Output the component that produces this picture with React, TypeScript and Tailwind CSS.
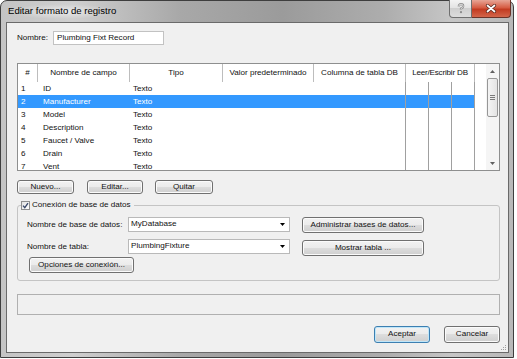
import React from 'react'

const rows = [
  ['1', 'ID'],
  ['2', 'Manufacturer'],
  ['3', 'Model'],
  ['4', 'Description'],
  ['5', 'Faucet / Valve'],
  ['6', 'Drain'],
  ['7', 'Vent'],
]

const btnBase =
  'flex items-center justify-center rounded-[3px] border bg-[linear-gradient(#f2f2f2,#ebebeb_50%,#dddddd_50%,#cfcfcf)] leading-none'

function Btn({ className, children, isDefault }: { className: string; children: React.ReactNode; isDefault?: boolean }) {
  return (
    <div
      className={`${btnBase} ${
        isDefault
          ? 'border-[#3c7fb1] shadow-[inset_0_0_0_1px_#bfe6f9]'
          : 'border-[#707070] shadow-[inset_0_0_0_1px_#fbfbfb]'
      } ${className}`}
    >
      {children}
    </div>
  )
}

function Combo({ value }: { value: string }) {
  return (
    <div className="flex h-[15px] w-[162px] items-center justify-between border border-[#b9b9b9] bg-white pl-[2px] pr-[4px]">
      <span className="leading-none">{value}</span>
      <svg width="5" height="3" viewBox="0 0 5 3">
        <path d="M0 0H5L2.5 3Z" fill="#000" />
      </svg>
    </div>
  )
}

function Scrollbar() {
  return (
    <div className="flex w-[13px] flex-col bg-[#f5f5f5]">
      <div className="flex h-[14px] items-center justify-center">
        <svg width="5" height="3" viewBox="0 0 5 3">
          <path d="M0 3H5L2.5 0Z" fill="#606060" />
        </svg>
      </div>
      <div className="mx-[1px] flex h-[39px] flex-col items-center justify-center gap-[1px] rounded-[2px] border border-[#979797] bg-[linear-gradient(90deg,#f4f4f4,#e4e4e4)]">
        <div className="h-px w-[5px] bg-[#7a7a7a]" />
        <div className="h-px w-[5px] bg-[#7a7a7a]" />
        <div className="h-px w-[5px] bg-[#7a7a7a]" />
      </div>
      <div className="flex-1" />
      <div className="flex h-[13px] items-center justify-center">
        <svg width="5" height="3" viewBox="0 0 5 3">
          <path d="M0 0H5L2.5 3Z" fill="#606060" />
        </svg>
      </div>
    </div>
  )
}

function FieldTable() {
  const head = 'flex h-full items-center justify-center whitespace-nowrap border-r border-[#bdbdbd]'
  return (
    <div className="ml-[10px] mt-[18px] flex h-[108px] w-[483px] border border-[#8e8f8f] bg-white">
      <div className="flex w-[457px] flex-col overflow-hidden">
        <div className="flex h-[18px] shrink-0">
          <div className={`${head} w-[20px]`}>#</div>
          <div className={`${head} w-[92px]`}>Nombre de campo</div>
          <div className={`${head} w-[93px]`}>Tipo</div>
          <div className={`${head} w-[91px]`}>Valor predeterminado</div>
          <div className={`${head} w-[92px]`}>Columna de tabla DB</div>
          <div className={`${head} w-[69px] tracking-[-0.2px]`}>Leer/Escribir DB</div>
        </div>
        <div className="flex-1 overflow-hidden">
          {rows.map(([n, name]) => {
            const sel = n === '2'
            return (
              <div
                key={n}
                className={`flex h-[13px] leading-[13px] ${sel ? 'bg-[#3399ff] text-white' : ''}`}
              >
                <div className="w-[20px] pl-[3px]">{n}</div>
                <div className="w-[92px] pl-[5px]">{name}</div>
                <div className="w-[93px] pl-[3px]">Texto</div>
                <div className="w-[91px]" />
                <div className="w-[92px] border-r border-[#a0a0a0]" />
                <div className="w-[23px] border-r border-[#a0a0a0]" />
                <div className="w-[23px] border-r border-[#a0a0a0]" />
                <div className="w-[23px] border-r border-[#a0a0a0]" />
              </div>
            )
          })}
        </div>
      </div>
      <div className="w-[11px]" />
      <Scrollbar />
    </div>
  )
}

export default function App() {
  return (
    <div className="h-[359px] w-[517px] bg-white font-['Liberation_Sans',Arial,sans-serif] text-[8.1px] text-[#111]">
      <div className="flex h-[358px] w-[514px] flex-col rounded-t-[7px] border border-[#3e3e3e] bg-[linear-gradient(90deg,#c4c4c4_0%,#cfcfcf_14%,#a8a8a8_35%,#9b9b9b_55%,#adadad_75%,#c6c6c6_88%,#b8b8b8_100%)]">
        <div className="flex h-[21px] items-start justify-between">
          <div className="flex h-[21px] items-center pl-[7px]">
            <span className="bg-[radial-gradient(closest-side,rgba(255,255,255,0.55),rgba(255,255,255,0))] text-[9.6px] text-black">
              Editar formato de registro
            </span>
          </div>
          <div className="-mt-px mr-[2px] flex">
            <div className="flex h-[18px] w-[23px] items-center justify-center rounded-bl-[4px] border border-t-0 border-[#6f6f6f] bg-[linear-gradient(#f3f3f3,#e2e2e2_50%,#cfcfcf_50%,#dcdcdc)]">
              <svg width="8" height="11" viewBox="0 0 8 11">
                <path d="M1.8 3.4Q1.8 1.2 4 1.2Q6.2 1.2 6.2 3.3Q6.2 4.7 4 5.6V7" fill="none" stroke="#8a8a8a" strokeWidth="2.2" />
                <path d="M1.8 3.4Q1.8 1.2 4 1.2Q6.2 1.2 6.2 3.3Q6.2 4.7 4 5.6V7" fill="none" stroke="#f0f0f0" strokeWidth="0.8" />
                <circle cx="4" cy="9.2" r="1.1" fill="#8a8a8a" />
              </svg>
            </div>
            <div className="flex h-[18px] w-[39px] items-center justify-center rounded-br-[4px] border border-l-0 border-t-0 border-[#6b3328] bg-[linear-gradient(#e7a596,#d65c43_45%,#c23b21_55%,#d3654a)]">
              <svg width="12" height="9" viewBox="0 0 12 9">
                <path d="M2.5 1.5L9.5 7.5M9.5 1.5L2.5 7.5" stroke="#5a2a20" strokeWidth="3.2" strokeLinecap="round" />
                <path d="M2.5 1.5L9.5 7.5M9.5 1.5L2.5 7.5" stroke="#ffffff" strokeWidth="1.7" strokeLinecap="round" />
              </svg>
            </div>
          </div>
        </div>

        <div className="relative ml-[5px] flex h-[331px] w-[503px] flex-col border border-[#6a6a6a] bg-[#f0f0f0]">
          <div className="ml-[10px] mt-[8px] flex h-[14px] items-center">
            <span className="w-[36px]">Nombre:</span>
            <div className="flex h-[14px] w-[111px] items-center border border-[#c2c2c2] bg-white pl-[3px]">
              Plumbing Fixt Record
            </div>
          </div>

          <FieldTable />

          <div className="ml-[10px] mt-[9px] flex">
            <Btn className="h-[14px] w-[57px]">Nuevo...</Btn>
            <Btn className="ml-[13px] h-[14px] w-[56px]">Editar...</Btn>
            <Btn className="ml-[12px] h-[14px] w-[58px]">Quitar</Btn>
          </div>

          <fieldset className="ml-[10px] mt-[6px] h-[81px] w-[483px] rounded-[3px] border border-[#c4c4c4]">
            <legend className="ml-[3px] flex h-[10px] items-center gap-[2px] pr-[3px]">
              <div className="flex h-[9px] w-[9px] items-center justify-center border border-[#8e8f8f] bg-[linear-gradient(135deg,#e2e2e2,#ffffff)]">
                <svg width="7" height="7" viewBox="0 0 7 7">
                  <path d="M1 3.6L2.8 5.6L6 1.2" fill="none" stroke="#3b4a6b" strokeWidth="1.4" />
                </svg>
              </div>
              <span className="leading-none">Conexión de base de datos</span>
            </legend>
            <div className="pl-[9px]">
              <div className="mt-[7px] flex h-[16px] items-start">
                <span className="w-[101px] leading-[15px]">Nombre de base de datos:</span>
                <Combo value="MyDatabase" />
                <Btn className="ml-[12px] h-[16px] w-[122px]">Administrar bases de datos...</Btn>
              </div>
              <div className="mt-[6px] flex h-[17px] items-start">
                <span className="w-[101px] leading-[15px]">Nombre de tabla:</span>
                <Combo value="PlumbingFixture" />
                <Btn className="ml-[12px] mt-[1px] h-[16px] w-[122px]">Mostrar tabla ...</Btn>
              </div>
              <div className="mt-[1px] flex">
                <Btn className="ml-[2px] h-[16px] w-[105px]">Opciones de conexión...</Btn>
              </div>
            </div>
          </fieldset>

          <div className="ml-[10px] mt-[13px] h-[21px] w-[483px] border border-[#b0b0b0]" />

          <div className="mr-[8px] mt-[11px] flex justify-end gap-[14px]">
            <Btn isDefault className="h-[17px] w-[56px]">Aceptar</Btn>
            <Btn className="h-[17px] w-[56px]">Cancelar</Btn>
          </div>

          <svg className="absolute bottom-[1px] right-[1px]" width="8" height="8" viewBox="0 0 8 8">
            <rect x="6" y="2" width="1" height="1" fill="#a0a0a0" />
            <rect x="6" y="4" width="1" height="1" fill="#a0a0a0" />
            <rect x="4" y="4" width="1" height="1" fill="#a0a0a0" />
            <rect x="6" y="6" width="1" height="1" fill="#a0a0a0" />
            <rect x="4" y="6" width="1" height="1" fill="#a0a0a0" />
            <rect x="2" y="6" width="1" height="1" fill="#a0a0a0" />
          </svg>
        </div>
      </div>
    </div>
  )
}
